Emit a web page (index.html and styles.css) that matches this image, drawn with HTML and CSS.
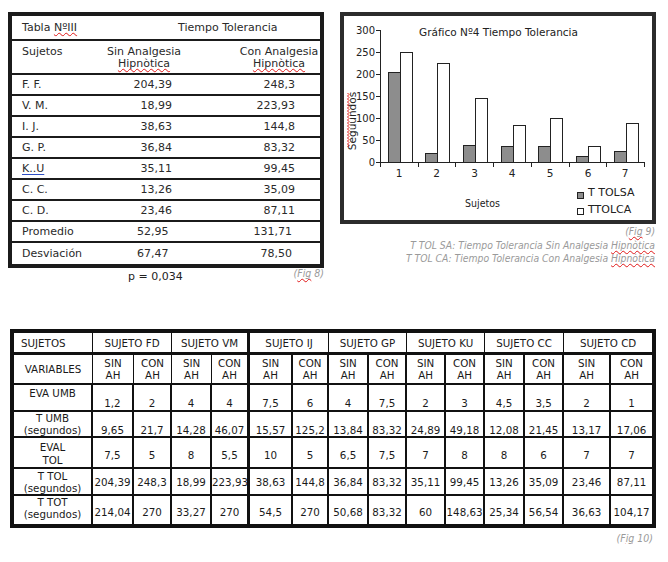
FILE: index.html
```html
<!DOCTYPE html>
<html lang="es">
<head>
<meta charset="utf-8">
<title>Tiempo Tolerancia</title>
<link rel="stylesheet" href="styles.css">
</head>
<body>
<div class="top">
  <div class="left">
    <div class="t1">
      <div class="r r-head">
        <div class="c c-title">Tabla <span class="sp">NºIII</span></div>
        <div class="c c-tt">Tiempo Tolerancia</div>
      </div>
      <div class="r r-cols">
        <div class="c c1">Sujetos</div>
        <div class="c c2 ctr">Sin Analgesia<br><span class="sp">Hipnòtica</span></div>
        <div class="c c3 ctr">Con Analgesia<br><span class="sp">Hipnòtica</span></div>
      </div>
      <div class="r"><div class="c c1">F. F.</div><div class="c c2 num">204,39</div><div class="c c3 num">248,3</div></div>
      <div class="r"><div class="c c1">V. M.</div><div class="c c2 num">18,99</div><div class="c c3 num">223,93</div></div>
      <div class="r"><div class="c c1">I. J.</div><div class="c c2 num">38,63</div><div class="c c3 num">144,8</div></div>
      <div class="r"><div class="c c1">G. P.</div><div class="c c2 num">36,84</div><div class="c c3 num">83,32</div></div>
      <div class="r"><div class="c c1"><span class="link">K..U</span></div><div class="c c2 num">35,11</div><div class="c c3 num">99,45</div></div>
      <div class="r"><div class="c c1">C. C.</div><div class="c c2 num">13,26</div><div class="c c3 num">35,09</div></div>
      <div class="r"><div class="c c1">C. D.</div><div class="c c2 num">23,46</div><div class="c c3 num">87,11</div></div>
      <div class="r stat"><div class="c c1">Promedio</div><div class="c c2">52,95</div><div class="c c3 num">131,71</div></div>
      <div class="r stat"><div class="c c1">Desviación</div><div class="c c2">67,47</div><div class="c c3 num">78,50</div></div>
    </div>
    <div class="under1">
      <span class="pval">p = 0,034</span>
      <span class="fig fig8">(<span class="sp">Fig</span> 8)</span>
    </div>
  </div>
  <div class="right">
    <div class="chart">
      <svg class="plot" width="308" height="204" viewBox="0 0 308 204">
        <text class="ttl" x="75" y="19.5">Gráfico Nº4 Tiempo Tolerancia</text>
        <g class="ax">
          <line x1="36.5" y1="14" x2="36.5" y2="147"/>
          <line x1="36" y1="146.5" x2="301" y2="146.5"/>
          <line x1="32" y1="146.5" x2="36" y2="146.5"/>
          <line x1="32" y1="124.5" x2="36" y2="124.5"/>
          <line x1="32" y1="102.5" x2="36" y2="102.5"/>
          <line x1="32" y1="80.5" x2="36" y2="80.5"/>
          <line x1="32" y1="58.5" x2="36" y2="58.5"/>
          <line x1="32" y1="36.5" x2="36" y2="36.5"/>
          <line x1="32" y1="14.5" x2="36" y2="14.5"/>
          <line x1="36.5" y1="146" x2="36.5" y2="151"/>
          <line x1="74.5" y1="146" x2="74.5" y2="151"/>
          <line x1="111.5" y1="146" x2="111.5" y2="151"/>
          <line x1="149.5" y1="146" x2="149.5" y2="151"/>
          <line x1="187.5" y1="146" x2="187.5" y2="151"/>
          <line x1="225.5" y1="146" x2="225.5" y2="151"/>
          <line x1="262.5" y1="146" x2="262.5" y2="151"/>
          <line x1="300.5" y1="146" x2="300.5" y2="151"/>
        </g>
        <g class="ylab">
          <text x="31" y="150">0</text>
          <text x="31" y="128">50</text>
          <text x="31" y="106">100</text>
          <text x="31" y="84">150</text>
          <text x="31" y="62">200</text>
          <text x="31" y="40">250</text>
          <text x="31" y="18">300</text>
        </g>
        <g class="xlab">
          <text x="55" y="161">1</text>
          <text x="92.5" y="161">2</text>
          <text x="130.5" y="161">3</text>
          <text x="168" y="161">4</text>
          <text x="206" y="161">5</text>
          <text x="244" y="161">6</text>
          <text x="281" y="161">7</text>
        </g>
        <g class="sa">
          <rect x="44.5" y="56.5" width="12" height="90"/>
          <rect x="81.5" y="137.5" width="12" height="9"/>
          <rect x="119.5" y="129.5" width="12" height="17"/>
          <rect x="157.5" y="130.5" width="12" height="16"/>
          <rect x="194.5" y="130.5" width="12" height="16"/>
          <rect x="232.5" y="140.5" width="12" height="6"/>
          <rect x="270.5" y="135.5" width="12" height="11"/>
        </g>
        <g class="ca">
          <rect x="56.5" y="36.5" width="12" height="110"/>
          <rect x="93.5" y="47.5" width="12" height="99"/>
          <rect x="131.5" y="82.5" width="12" height="64"/>
          <rect x="169.5" y="109.5" width="12" height="37"/>
          <rect x="206.5" y="102.5" width="12" height="44"/>
          <rect x="244.5" y="130.5" width="12" height="16"/>
          <rect x="282.5" y="107.5" width="12" height="39"/>
        </g>
        <text class="yt" transform="translate(12,105) rotate(-90)">Seguundos</text>
        <path class="wavy" d="M3.5 77 l1.5 1.5 -1.5 1.5 1.5 1.5 -1.5 1.5 1.5 1.5 -1.5 1.5 1.5 1.5 -1.5 1.5 1.5 1.5 -1.5 1.5 1.5 1.5 -1.5 1.5 1.5 1.5 -1.5 1.5 1.5 1.5 -1.5 1.5 1.5 1.5 -1.5 1.5 1.5 1.5 -1.5 1.5 1.5 1.5 -1.5 1.5 1.5 1.5 -1.5 1.5 1.5 1.5 -1.5 1.5 1.5 1.5 -1.5 1.5 1.5 1.5 -1.5 1.5 1.5 1.5 -1.5 1.5 1.5 1.5 -1.5 1.5 1.5 1.5 -1.5 1.5"/>
        <text class="xt" x="138.5" y="190.5">Sujetos</text>
        <rect class="lg-sa" x="233.5" y="176.5" width="6" height="6"/>
        <text class="lg" x="244" y="180">T TOLSA</text>
        <rect class="lg-ca" x="233.5" y="192.5" width="6" height="6"/>
        <text class="lg" x="244" y="197">TTOLCA</text>
      </svg>
    </div>
    <div class="caps">
      <div class="fig">(<span class="sp">Fig</span> 9)</div>
      <div class="fig">T TOL SA: Tiempo Tolerancia Sin Analgesia <span class="sp">Hipnòtica</span></div>
      <div class="fig">T TOL CA: Tiempo Tolerancia Con Analgesia <span class="sp">Hipnòtica</span></div>
    </div>
  </div>
</div>

<table class="t2">
  <colgroup>
    <col style="width:79px"><col style="width:41px"><col style="width:38px"><col style="width:40px"><col style="width:38px"><col style="width:43px"><col style="width:36px"><col style="width:40px"><col style="width:38px"><col style="width:39px"><col style="width:39px"><col style="width:40px"><col style="width:39px"><col style="width:47px"><col style="width:41px">
  </colgroup>
  <tr class="h1">
    <td class="lbl-left">SUJETOS</td>
    <td colspan="2">SUJETO FD</td>
    <td colspan="2" class="thick">SUJETO VM</td>
    <td colspan="2">SUJETO IJ</td>
    <td colspan="2">SUJETO GP</td>
    <td colspan="2">SUJETO KU</td>
    <td colspan="2">SUJETO CC</td>
    <td colspan="2">SUJETO CD</td>
  </tr>
  <tr class="h2">
    <td>VARIABLES</td>
    <td>SIN<br>AH</td><td>CON<br>AH</td>
    <td>SIN<br>AH</td><td class="thick">CON<br>AH</td>
    <td class="w2">SIN<br>AH</td><td class="w2">CON<br>AH</td>
    <td class="w2">SIN<br>AH</td><td class="w2">CON<br>AH</td>
    <td class="w2">SIN<br>AH</td><td class="w2">CON<br>AH</td>
    <td class="w2">SIN<br>AH</td><td class="w2">CON<br>AH</td>
    <td class="w2">SIN<br>AH</td><td>CON<br>AH</td>
  </tr>
  <tr class="r3">
    <td class="lbl">EVA UMB</td>
    <td>1,2</td><td>2</td><td>4</td><td class="thick">4</td><td>7,5</td><td>6</td><td>4</td><td>7,5</td><td>2</td><td>3</td><td>4,5</td><td>3,5</td><td>2</td><td>1</td>
  </tr>
  <tr class="r4">
    <td class="lbl">T UMB<br>(segundos)</td>
    <td>9,65</td><td>21,7</td><td>14,28</td><td class="thick">46,07</td><td>15,57</td><td>125,2</td><td>13,84</td><td>83,32</td><td>24,89</td><td>49,18</td><td>12,08</td><td>21,45</td><td>13,17</td><td>17,06</td>
  </tr>
  <tr class="r5">
    <td class="lbl">EVAL<br>TOL</td>
    <td>7,5</td><td>5</td><td>8</td><td class="thick">5,5</td><td>10</td><td>5</td><td>6,5</td><td>7,5</td><td>7</td><td>8</td><td>8</td><td>6</td><td>7</td><td>7</td>
  </tr>
  <tr class="r6">
    <td class="lbl">T TOL<br>(segundos)</td>
    <td>204,39</td><td>248,3</td><td>18,99</td><td class="thick">223,93</td><td>38,63</td><td>144,8</td><td>36,84</td><td>83,32</td><td>35,11</td><td>99,45</td><td>13,26</td><td>35,09</td><td>23,46</td><td>87,11</td>
  </tr>
  <tr class="r7">
    <td class="lbl">T TOT<br>(segundos)</td>
    <td>214,04</td><td>270</td><td>33,27</td><td class="thick">270</td><td>54,5</td><td>270</td><td>50,68</td><td>83,32</td><td>60</td><td>148,63</td><td>25,34</td><td>56,54</td><td>36,63</td><td>104,17</td>
  </tr>
</table>
<div class="fig fig10">(<span class="sp">Fig</span> 10)</div>
</body>
</html>
```
FILE: styles.css
```css
* { box-sizing: border-box; }

html, body { background: #ffffff; }

body {
  margin: 0;
  padding: 12px 0 0 8px;
  width: 668px;
  font-family: "DejaVu Sans Condensed", "DejaVu Sans", sans-serif;
  color: #222222;
}

.top {
  display: flex;
  gap: 16px;
  align-items: flex-start;
}

.left { width: 316px; }
.right { width: 316px; }

/* ---------- table 1 ---------- */
.t1 {
  width: 316px;
  border: 4px solid #1b1b1b;
  font-family: "DejaVu Sans", sans-serif;
  font-size: 11px;
  line-height: 12px;
  color: #2a2a2a;
}

.r {
  display: grid;
  grid-template-columns: 92px 80px 54px 82px;
  align-items: center;
  height: 21px;
  border-bottom: 2px solid #1b1b1b;
}

.r:last-child { border-bottom: 0; }

.r-head { height: 25px; }
.r-cols { height: 34px; align-items: start; padding-top: 5px; }
.r-cols .ctr { line-height: 12px; }

.c1 { grid-column: 1; padding-left: 10px; }
.c2 { grid-column: 2; }
.c3 { grid-column: 4; }

.c-title { grid-column: 1; padding-left: 10px; white-space: nowrap; }
.c-tt { grid-column: 2 / 5; padding-left: 74px; }

.ctr { text-align: center; white-space: nowrap; }
.num { text-align: right; }
.c2.num { padding-right: 12px; }
.c3.num { padding-right: 25px; }

.stat .c2 { padding-left: 33px; }
.stat .c3.num { padding-right: 28px; }

.sp {
  text-decoration: underline wavy #e01818;
  text-decoration-thickness: 1px;
  text-underline-offset: 1px;
  text-decoration-skip-ink: none;
}

.link {
  text-decoration: underline #2f4fc4;
  text-decoration-thickness: 1px;
  text-underline-offset: 2px;
}

.under1 {
  display: flex;
  justify-content: space-between;
  height: 18px;
}

.pval {
  font-family: "DejaVu Sans", sans-serif;
  font-size: 11px;
  line-height: 18px;
  padding-left: 120px;
}

.fig {
  font-style: italic;
  color: #9a9a9a;
  font-size: 10.5px;
}

.fig8 {
  line-height: 12px;
  margin-top: -1px;
}

/* ---------- chart ---------- */
.chart {
  width: 316px;
  height: 212px;
  border: 4px solid #2c2c2c;
  background: #ffffff;
}

.plot { display: block; font-family: "DejaVu Sans", sans-serif; }

.ttl { font-size: 10.5px; fill: #222; }
.ax line { stroke: #222; stroke-width: 1; }
.ylab text { font-size: 10px; fill: #222; text-anchor: end; }
.xlab text { font-size: 10.5px; fill: #222; text-anchor: middle; }
.sa rect { fill: #8d8d8d; stroke: #222; stroke-width: 1; }
.ca rect { fill: #ffffff; stroke: #222; stroke-width: 1; }
.yt { font-size: 10.5px; fill: #222; text-anchor: middle; }
.wavy { fill: none; stroke: #e01818; stroke-width: 1; }
.xt { font-family: "DejaVu Sans Condensed", sans-serif; font-size: 10.5px; fill: #222; text-anchor: middle; }
.lg { font-size: 11px; fill: #222; }
.lg-sa { fill: #8d8d8d; stroke: #222; stroke-width: 1; }
.lg-ca { fill: #ffffff; stroke: #222; stroke-width: 1; }

.caps {
  text-align: right;
  padding-top: 1px;
  padding-right: 1px;
}

.caps .fig { line-height: 13.5px; font-size: 10.3px; }

/* ---------- table 2 ---------- */
.t2 {
  margin: 43px 0 0 2px;
  width: 646px;
  border: 4px solid #111111;
  border-collapse: separate;
  border-spacing: 0;
  table-layout: fixed;
  font-family: "DejaVu Sans", sans-serif;
  font-size: 10.3px;
  line-height: 12px;
  color: #1a1a1a;
}

.t2 td {
  padding: 0;
  text-align: center;
  border-right: 2px solid #111111;
  border-bottom: 2px solid #111111;
  vertical-align: bottom;
  white-space: nowrap;
  overflow: visible;
}

.t2 td:last-child { border-right: 0; }
.t2 tr:last-child td { border-bottom: 0; }

.t2 .h1 { height: 22px; }
.t2 .h1 td { border-right-width: 1px; border-bottom-width: 3px; vertical-align: middle; }
.t2 .h1 td.lbl-left { text-align: left; padding-left: 7px; }

.t2 .h2 { height: 30px; }
.t2 .h2 td { border-right-width: 1px; vertical-align: middle; }
.t2 .h2 td.w2 { border-right-width: 2px; }

.t2 td.thick,
.t2 .h1 td.thick,
.t2 .h2 td.thick { border-right-width: 3px; }

.t2 td.lbl { vertical-align: middle; padding: 0; }

.t2 .r3 { height: 27px; }
.t2 .r3 td { padding-bottom: 1px; }
.t2 .r3 td.lbl { vertical-align: top; padding: 2px 0 0; }

.t2 .r4 { height: 26px; }
.t2 .r4 td.lbl { line-height: 12px; }

.t2 .r5 { height: 30px; }
.t2 .r5 td { padding-bottom: 6px; }
.t2 .r5 td.lbl { vertical-align: top; line-height: 13px; padding: 3px 0 0; }

.t2 .r6 { height: 27px; }
.t2 .r6 td { vertical-align: middle; }

.t2 .r7 { height: 28px; }
.t2 .r7 td { padding-bottom: 6px; }
.t2 .r7 td.lbl { vertical-align: top; padding: 0; }

.fig10 {
  width: 648px;
  text-align: right;
  padding-right: 3px;
  margin-top: 4px;
  line-height: 12px;
}
```
